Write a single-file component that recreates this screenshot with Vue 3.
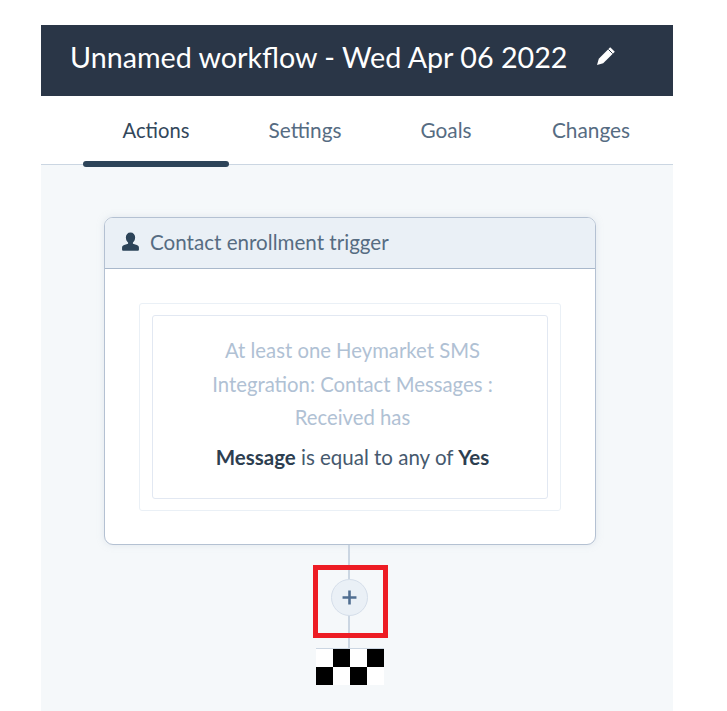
<script setup>
const tabs = [
  { label: 'Actions', active: true },
  { label: 'Settings', active: false },
  { label: 'Goals', active: false },
  { label: 'Changes', active: false },
]
</script>

<template>
  <div class="page">
    <header class="head">
      <h1 class="title">Unnamed workflow - Wed Apr 06 2022</h1>
      <svg class="pencil" viewBox="0 0 20 20" aria-hidden="true">
        <path d="M14.2 1.2 18.8 5.8 7.2 17.2 1 19 2.8 12.8Z" fill="#fff" />
        <path d="M12.4 3.4 16.6 7.6" stroke="#2a3647" stroke-width="1" fill="none" />
      </svg>
    </header>
    <nav class="tabs">
      <div v-for="t in tabs" :key="t.label" class="tab" :class="{ active: t.active }">{{ t.label }}</div>
    </nav>
    <main class="canvas">
      <section class="card">
        <div class="card-head">
          <svg class="person" viewBox="0 0 18 18" aria-hidden="true">
            <path d="M9 .5c2.700 0 4.400 2 4.400 4.600 0 2-.9 3.800-2.100 4.800v1.200l3.700 1.300c1.300.5 2 1.300 2 2.600v1.500c0 .8-.5 1.200-1.200 1.200H2.200C1.500 17.700 1 17.300 1 16.500V15c0-1.300.7-2.100 2-2.600l3.700-1.300V9.900C5.500 8.900 4.600 7.100 4.600 5.100 4.600 2.500 6.300.5 9 .5Z" fill="#2d4459" />
          </svg>
          <span>Contact enrollment trigger</span>
        </div>
        <div class="card-body">
          <div class="outer-box">
            <div class="inner-box">
              <p class="muted">At least one Heymarket SMS Integration: Contact Messages : Received has</p>
              <p class="rule"><b>Message</b> is equal to any of <b>Yes</b></p>
            </div>
          </div>
        </div>
      </section>
      <div class="connector">
        <div class="plus">
          <svg viewBox="0 0 14 14" width="15" height="15" aria-hidden="true">
            <path d="M7 .5v13M.5 7h13" stroke="#506e91" stroke-width="2.400" fill="none" />
          </svg>
        </div>
        <div class="highlight"></div>
      </div>
      <div class="checker">
        <i class="w"></i><i class="k"></i><i class="w"></i><i class="k"></i>
        <i class="k"></i><i class="w"></i><i class="k"></i><i class="w"></i>
      </div>
    </main>
  </div>
</template>

<style>
html, body { margin: 0; background: #fff; }
</style>

<style scoped>
.page {
  width: 632px;
  margin: 0 0 0 41px;
  padding-top: 25px;
  height: 686px;
  display: flex;
  flex-direction: column;
  font-family: Lato, "Open Sans", sans-serif;
  color: #33475b;
  overflow: hidden;
}
.head {
  height: 71px;
  flex: none;
  background: #2a3647;
  display: flex;
  align-items: center;
  padding-left: 29px;
  gap: 29px;
  box-sizing: border-box;
  padding-bottom: 8px;
}
.title {
  margin: 0;
  font-size: 28.700px;
  font-weight: 400;
  color: #fff;
  white-space: nowrap;
}
.pencil { width: 20px; height: 20px; margin-top: -2px; }
.tabs {
  height: 69px;
  flex: none;
  box-sizing: border-box;
  border-bottom: 1px solid #cbd6e2;
  display: flex;
  padding-left: 42px;
  background: #fff;
}
.tab {
  position: relative;
  text-align: center;
  font-size: 20.800px;
  line-height: 67px;
  color: #566c82;
}
.tab:nth-child(1) { width: 146px; font-size: 20.200px; line-height: 68px; color: #33475b; }
.tab:nth-child(2) { width: 152px; }
.tab:nth-child(3) { width: 130px; }
.tab:nth-child(4) { width: 160px; }
.tab.active::after {
  content: "";
  position: absolute;
  left: 0;
  right: 0;
  bottom: -3px;
  height: 6px;
  border-radius: 3px;
  background: #2d4459;
}
.canvas {
  flex: 1;
  background: #f5f8fa;
  padding: 52px 0 0 63px;
}
.card {
  width: 492px;
  height: 328px;
  box-sizing: border-box;
  background: #fff;
  border: 1px solid #b4c1d2;
  border-radius: 9px;
  overflow: hidden;
  box-shadow: 0 0 6px rgba(203, 214, 226, 0.5);
}
.card-head {
  height: 51px;
  box-sizing: border-box;
  background: #eaf0f6;
  border-bottom: 1px solid #a9b8cb;
  display: flex;
  align-items: center;
  padding: 0 0 2px 16px;
  gap: 10px;
  font-size: 20.600px;
  color: #566c82;
}
.person { width: 19px; height: 19px; margin-top: -2px; }
.card-body { padding: 34px 34px 0; }
.outer-box {
  height: 208px;
  box-sizing: border-box;
  border: 1px solid #eaf0f6;
  border-radius: 3px;
  padding: 11px 12px;
}
.inner-box {
  height: 184px;
  box-sizing: border-box;
  border: 1px solid #e2e8f2;
  border-radius: 3px;
  padding: 18px 47px 0 52px;
  text-align: center;
  font-size: 20.300px;
}
.muted { margin: 0; line-height: 33.700px; color: #b0c1d4; }
.rule { margin: 5px -20px 0; line-height: 34px; color: #46596e; white-space: nowrap; font-size: 20.500px; }
.rule b { color: #2d3e50; font-weight: 700; }
.connector {
  position: relative;
  width: 492px;
  height: 103px;
}
.connector::before {
  content: "";
  position: absolute;
  left: 244px;
  top: 0;
  bottom: 0;
  width: 2px;
  background: #cbd6e2;
}
.plus {
  position: absolute;
  left: 227px;
  top: 34px;
  width: 37px;
  height: 37px;
  box-sizing: border-box;
  border: 1px solid #d5deea;
  border-radius: 50%;
  background: #eaf0f6;
  display: flex;
  align-items: center;
  justify-content: center;
}
.highlight {
  position: absolute;
  left: 209px;
  top: 20px;
  width: 75px;
  height: 73px;
  box-sizing: border-box;
  border: 5px solid #ed1c24;
}
.checker {
  margin-left: 212px;
  width: 68px;
  height: 36px;
  display: grid;
  grid-template-columns: repeat(4, 17px);
  grid-template-rows: repeat(2, 18px);
  border-top: 1px solid #cbd6e2;
  box-sizing: border-box;
}
.checker i { display: block; }
.checker .k { background: #000; }
.checker .w { background: #fff; }
</style>
